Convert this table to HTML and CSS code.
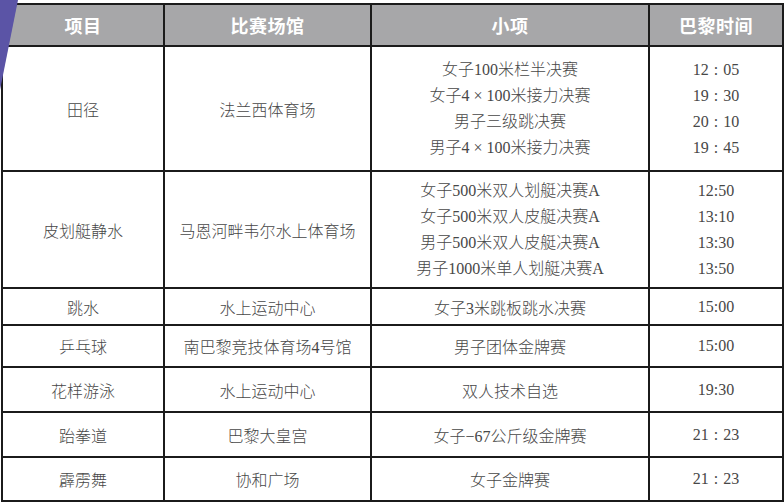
FILE: index.html
```html
<!DOCTYPE html>
<html lang="zh-CN">
<head>
<meta charset="utf-8">
<title>赛程</title>
<link rel="stylesheet" href="styles.css">
</head>
<body>
<div class="page">
  <table class="sched">
    <colgroup>
      <col class="c1"><col class="c2"><col class="c3"><col class="c4">
    </colgroup>
    <thead>
      <tr class="h-head">
        <th>项目</th><th>比赛场馆</th><th>小项</th><th>巴黎时间</th>
      </tr>
    </thead>
    <tbody>
      <tr class="h-r1">
        <td>田径</td>
        <td>法兰西体育场</td>
        <td class="multi">女子100米栏半决赛<br>女子4 × 100米接力决赛<br>男子三级跳决赛<br>男子4 × 100米接力决赛</td>
        <td class="multi">12<span class="wc">:</span>05<br>19<span class="wc">:</span>30<br>20<span class="wc">:</span>10<br>19<span class="wc">:</span>45</td>
      </tr>
      <tr class="h-r2">
        <td>皮划艇静水</td>
        <td>马恩河畔韦尔水上体育场</td>
        <td class="multi">女子500米双人划艇决赛A<br>女子500米双人皮艇决赛A<br>男子500米双人皮艇决赛A<br>男子1000米单人划艇决赛A</td>
        <td class="multi">12:50<br>13:10<br>13:30<br>13:50</td>
      </tr>
      <tr class="h-r3">
        <td>跳水</td><td>水上运动中心</td><td>女子3米跳板跳水决赛</td><td>15:00</td>
      </tr>
      <tr class="h-r4">
        <td>乒乓球</td><td>南巴黎竞技体育场4号馆</td><td>男子团体金牌赛</td><td>15:00</td>
      </tr>
      <tr class="h-r5">
        <td>花样游泳</td><td>水上运动中心</td><td>双人技术自选</td><td>19:30</td>
      </tr>
      <tr class="h-r6">
        <td>跆拳道</td><td>巴黎大皇宫</td><td>女子−67公斤级金牌赛</td><td>21<span class="wc">:</span>23</td>
      </tr>
      <tr class="h-r7">
        <td>霹雳舞</td><td>协和广场</td><td>女子金牌赛</td><td>21<span class="wc">:</span>23</td>
      </tr>
    </tbody>
  </table>
  <svg class="corner" width="24" height="96" viewBox="0 0 24 96" aria-hidden="true">
    <polygon points="0,0 18,0 0,90" fill="#5b54a6"/>
  </svg>
</div>
</body>
</html>
```

FILE: styles.css
```css
html, body {
  margin: 0;
  padding: 0;
  background: #ffffff;
}

.page {
  position: relative;
  width: 784px;
  height: 502px;
  overflow: hidden;
  padding: 3px 0 0 1px;
  box-sizing: border-box;
}

.sched {
  border-collapse: collapse;
  table-layout: fixed;
  width: 781px;
  border: 2px solid #1b1b1b;
  font-family: "Liberation Serif", "Noto Sans CJK SC", serif;
  font-size: 16px;
  font-weight: 300;
  color: #474747;
}

.c1 { width: 162px; }
.c2 { width: 207px; }
.c3 { width: 278px; }
.c4 { width: 134px; }

.sched th,
.sched td {
  border: 2px solid #1b1b1b;
  text-align: center;
  vertical-align: middle;
  padding: 0;
}

.sched th {
  background: #a7a7a9;
  color: #ffffff;
  font-family: "Noto Sans CJK SC", sans-serif;
  font-weight: 700;
  font-size: 18px;
  letter-spacing: 0.5px;
}

.sched td.multi {
  line-height: 26px;
}

.wc {
  margin: 0 5px;
}

.h-head { height: 42px; }
.h-r1 { height: 125px; }
.h-r2 { height: 117px; }
.h-r3 { height: 37px; }
.h-r4 { height: 42px; }
.h-r5 { height: 45px; }
.h-r6 { height: 45px; }
.h-r7 { height: 44px; }

.corner {
  position: absolute;
  left: 0;
  top: 0;
}
```
